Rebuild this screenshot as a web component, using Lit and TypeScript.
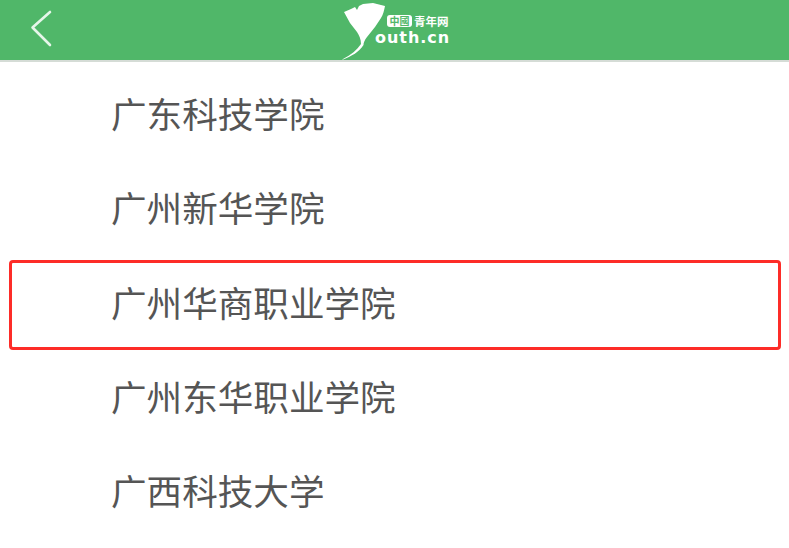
import { LitElement, html, css } from "lit";
import { customElement } from "lit/decorators.js";

const schools = ["广东科技学院", "广州新华学院", "广州华商职业学院", "广州东华职业学院", "广西科技大学"];

@customElement("app-root")
export class AppRoot extends LitElement {
  static styles = css`
    :host { display: block; width: 789px; height: 548px; overflow: hidden; background: #fff; font-family: "Noto Sans CJK SC", "Liberation Sans", sans-serif; position: relative; }
    .bar { height: 60px; background: #50b769; border-bottom: 2px solid #d5dcd6; display: flex; align-items: center; position: relative; box-sizing: content-box; }
    .back { margin-left: 29px; width: 26px; height: 42px; display: block; }
    .logo { position: absolute; left: 340px; top: 0; width: 60px; height: 60px; }
    .wordmark { position: absolute; left: 375px; top: 27.500px; color: #fff; font: 700 16px/20px "DejaVu Sans", "Liberation Sans", sans-serif; letter-spacing: 0.95px; white-space: nowrap; }
    .cn { position: absolute; left: 414px; top: 14px; color: #fff; font: 700 11.5px/15px "Noto Sans CJK SC", serif; white-space: nowrap; }
    .badge { position: absolute; left: 387px; top: 15px; width: 25px; height: 12px; background: #fff; border-radius: 3px; color: #50b769; font: 700 10px/12px "Noto Sans CJK SC", sans-serif; text-align: center; white-space: nowrap; }
    .list { padding-top: 3.5px; display: flex; flex-direction: column; }
    .row { height: 94.25px; display: flex; align-items: center; padding-left: 111px; font-size: 35.6px; color: #555; position: relative; white-space: nowrap; }
    .mark::after { content: ""; position: absolute; left: 9px; right: 8px; top: 5.500px; height: 90px; box-sizing: border-box; border: 3px solid #fd2c28; border-radius: 4px; }
  `;

  render() {
    return html`
      <div class="bar">
        <svg class="back" viewBox="0 0 26 42" fill="none" stroke="#e6f6ea" stroke-width="2.6" stroke-linecap="round" stroke-linejoin="round"><path d="M21 3 L3.500 18.500 L21 36"/></svg>
        <svg class="logo" viewBox="0 0 60 60">
          <path fill="#fff" d="M4 12 L11 9 L15 7 L17 10 L19 6 L23 4 L33 3 L45 6 C44 11 43 15 41 18 L35 27 L27 37 C24.500 40 23.500 43 23.500 45 C19 52 12 56 2 60 L3 59 C11 55 17 50 21 44 C21 39 19 35 17 32 L10 23 Z"/>
        </svg>
        <div class="badge">中國</div>
        <div class="cn">青年网</div>
        <div class="wordmark">outh.cn</div>
      </div>
      <div class="list">
        ${schools.map((s, i) => html`<div class="row ${i === 2 ? "mark" : ""}">${s}</div>`)}
      </div>
    `;
  }
}
